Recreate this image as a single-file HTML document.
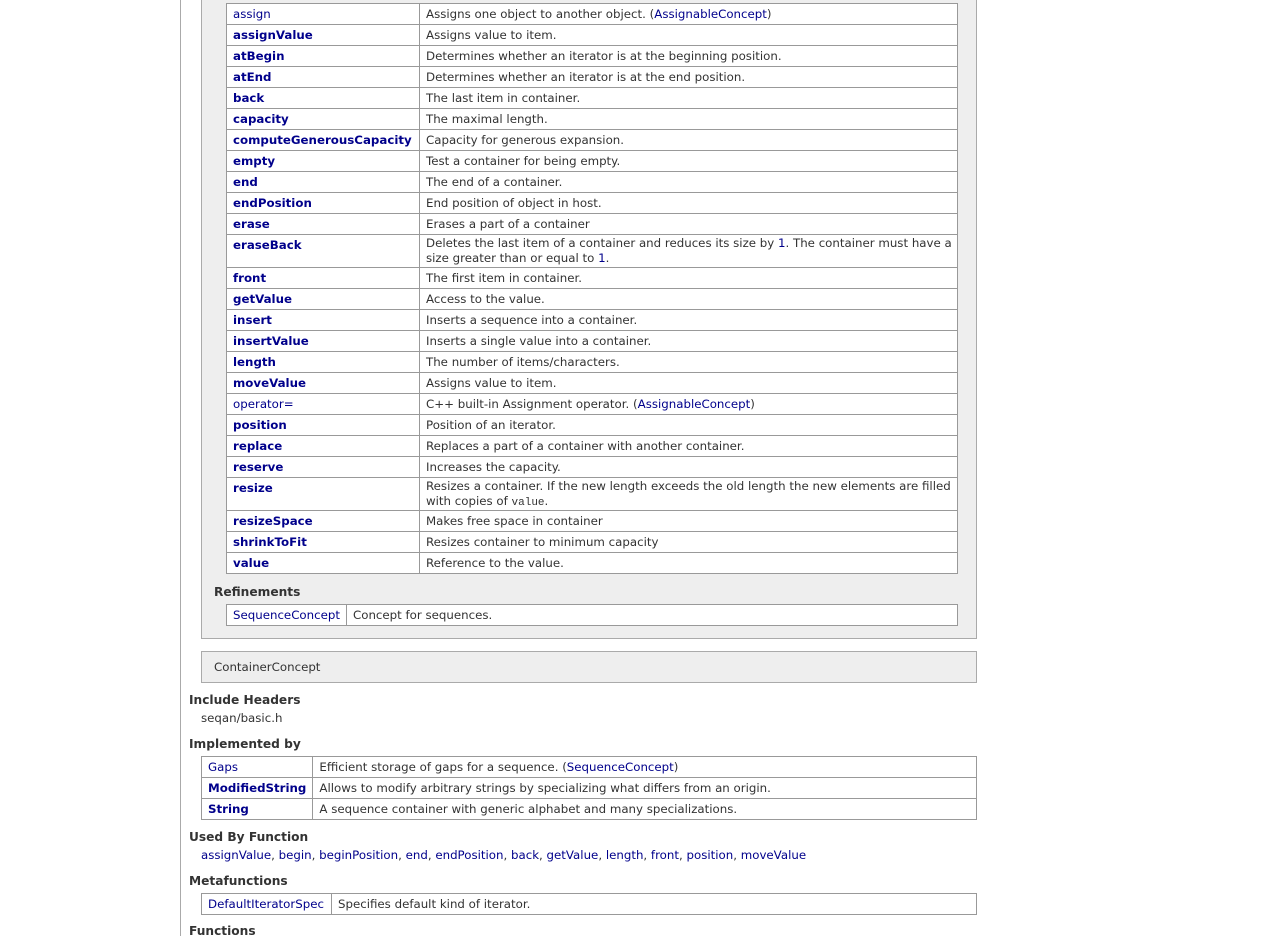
<!DOCTYPE html>
<html><head><meta charset="utf-8"><style>
*{margin:0;padding:0;box-sizing:border-box}
body{width:1267px;height:936px;overflow:hidden;background:#fff;font-family:"DejaVu Sans","Liberation Sans",sans-serif;font-size:11.8px;color:#333;position:relative}
a{color:#00008b;text-decoration:none}
.vl{position:absolute;left:180px;top:0;width:1px;height:936px;background:#aaa}
.box{position:absolute;background:#eee;border:1px solid #aaa}
table{position:absolute;border-collapse:collapse;background:#fff}
td{border:1px solid #999;padding:0 6px;vertical-align:top;line-height:15px;padding-top:3px;height:21px;white-space:normal}
td.t{height:33px;padding-top:1px}
h4{position:absolute;font-size:12.2px;font-weight:bold;color:#333}
.p{position:absolute}
code{font-family:"Liberation Mono",monospace;font-size:11px;line-height:0}
</style></head><body>
<div class="vl"></div>
<div class="box" style="left:201px;top:-5px;width:776px;height:644px"></div>
<table style="left:226px;top:3px;width:732px">
<colgroup><col style="width:193px"><col></colgroup>
<tr><td><a>assign</a></td><td>Assigns one object to another object. (<a>AssignableConcept</a>)</td></tr>
<tr><td><b><a>assignValue</a></b></td><td>Assigns value to item.</td></tr>
<tr><td><b><a>atBegin</a></b></td><td>Determines whether an iterator is at the beginning position.</td></tr>
<tr><td><b><a>atEnd</a></b></td><td>Determines whether an iterator is at the end position.</td></tr>
<tr><td><b><a>back</a></b></td><td>The last item in container.</td></tr>
<tr><td><b><a>capacity</a></b></td><td>The maximal length.</td></tr>
<tr><td><b><a>computeGenerousCapacity</a></b></td><td>Capacity for generous expansion.</td></tr>
<tr><td><b><a>empty</a></b></td><td>Test a container for being empty.</td></tr>
<tr><td><b><a>end</a></b></td><td>The end of a container.</td></tr>
<tr><td><b><a>endPosition</a></b></td><td>End position of object in host.</td></tr>
<tr><td><b><a>erase</a></b></td><td>Erases a part of a container</td></tr>
<tr><td class="t" style="padding-top:3px"><b><a>eraseBack</a></b></td><td class="t" style="padding-right:0">Deletes the last item of a container and reduces its size by <a>1</a>. The container must have a size greater than or equal to <a>1</a>.</td></tr>
<tr><td><b><a>front</a></b></td><td>The first item in container.</td></tr>
<tr><td><b><a>getValue</a></b></td><td>Access to the value.</td></tr>
<tr><td><b><a>insert</a></b></td><td>Inserts a sequence into a container.</td></tr>
<tr><td><b><a>insertValue</a></b></td><td>Inserts a single value into a container.</td></tr>
<tr><td><b><a>length</a></b></td><td>The number of items/characters.</td></tr>
<tr><td><b><a>moveValue</a></b></td><td>Assigns value to item.</td></tr>
<tr><td><a>operator=</a></td><td>C++ built-in Assignment operator. (<a>AssignableConcept</a>)</td></tr>
<tr><td><b><a>position</a></b></td><td>Position of an iterator.</td></tr>
<tr><td><b><a>replace</a></b></td><td>Replaces a part of a container with another container.</td></tr>
<tr><td><b><a>reserve</a></b></td><td>Increases the capacity.</td></tr>
<tr><td class="t" style="padding-top:3px"><b><a>resize</a></b></td><td class="t" style="padding-right:0">Resizes a container. If the new length exceeds the old length the new elements are filled with copies of <code>value</code>.</td></tr>
<tr><td><b><a>resizeSpace</a></b></td><td>Makes free space in container</td></tr>
<tr><td><b><a>shrinkToFit</a></b></td><td>Resizes container to minimum capacity</td></tr>
<tr><td><b><a>value</a></b></td><td>Reference to the value.</td></tr>
</table>
<h4 style="left:214px;top:585px">Refinements</h4>
<table style="left:226px;top:604px;width:732px">
<colgroup><col style="width:119px"><col></colgroup>
<tr><td><a>SequenceConcept</a></td><td>Concept for sequences.</td></tr></table>
<div class="box" style="left:201px;top:651px;width:776px;height:32px"></div>
<div class="p" style="left:214px;top:660px">ContainerConcept</div>
<h4 style="left:189px;top:693px">Include Headers</h4>
<div class="p" style="left:201px;top:711px">seqan/basic.h</div>
<h4 style="left:189px;top:737px">Implemented by</h4>
<table style="left:201px;top:756px;width:776px">
<colgroup><col style="width:111px"><col></colgroup>
<tr><td><a>Gaps</a></td><td>Efficient storage of gaps for a sequence. (<a>SequenceConcept</a>)</td></tr>
<tr><td><b><a>ModifiedString</a></b></td><td>Allows to modify arbitrary strings by specializing what differs from an origin.</td></tr>
<tr><td><b><a>String</a></b></td><td>A sequence container with generic alphabet and many specializations.</td></tr></table>
<h4 style="left:189px;top:830px">Used By Function</h4>
<div class="p" style="left:201px;top:848px"><a>assignValue</a>, <a>begin</a>, <a>beginPosition</a>, <a>end</a>, <a>endPosition</a>, <a>back</a>, <a>getValue</a>, <a>length</a>, <a>front</a>, <a>position</a>, <a>moveValue</a></div>
<h4 style="left:189px;top:874px">Metafunctions</h4>
<table style="left:201px;top:893px;width:776px">
<colgroup><col style="width:130px"><col></colgroup>
<tr><td><a>DefaultIteratorSpec</a></td><td>Specifies default kind of iterator.</td></tr></table>
<h4 style="left:189px;top:924px">Functions</h4>
</body></html>
